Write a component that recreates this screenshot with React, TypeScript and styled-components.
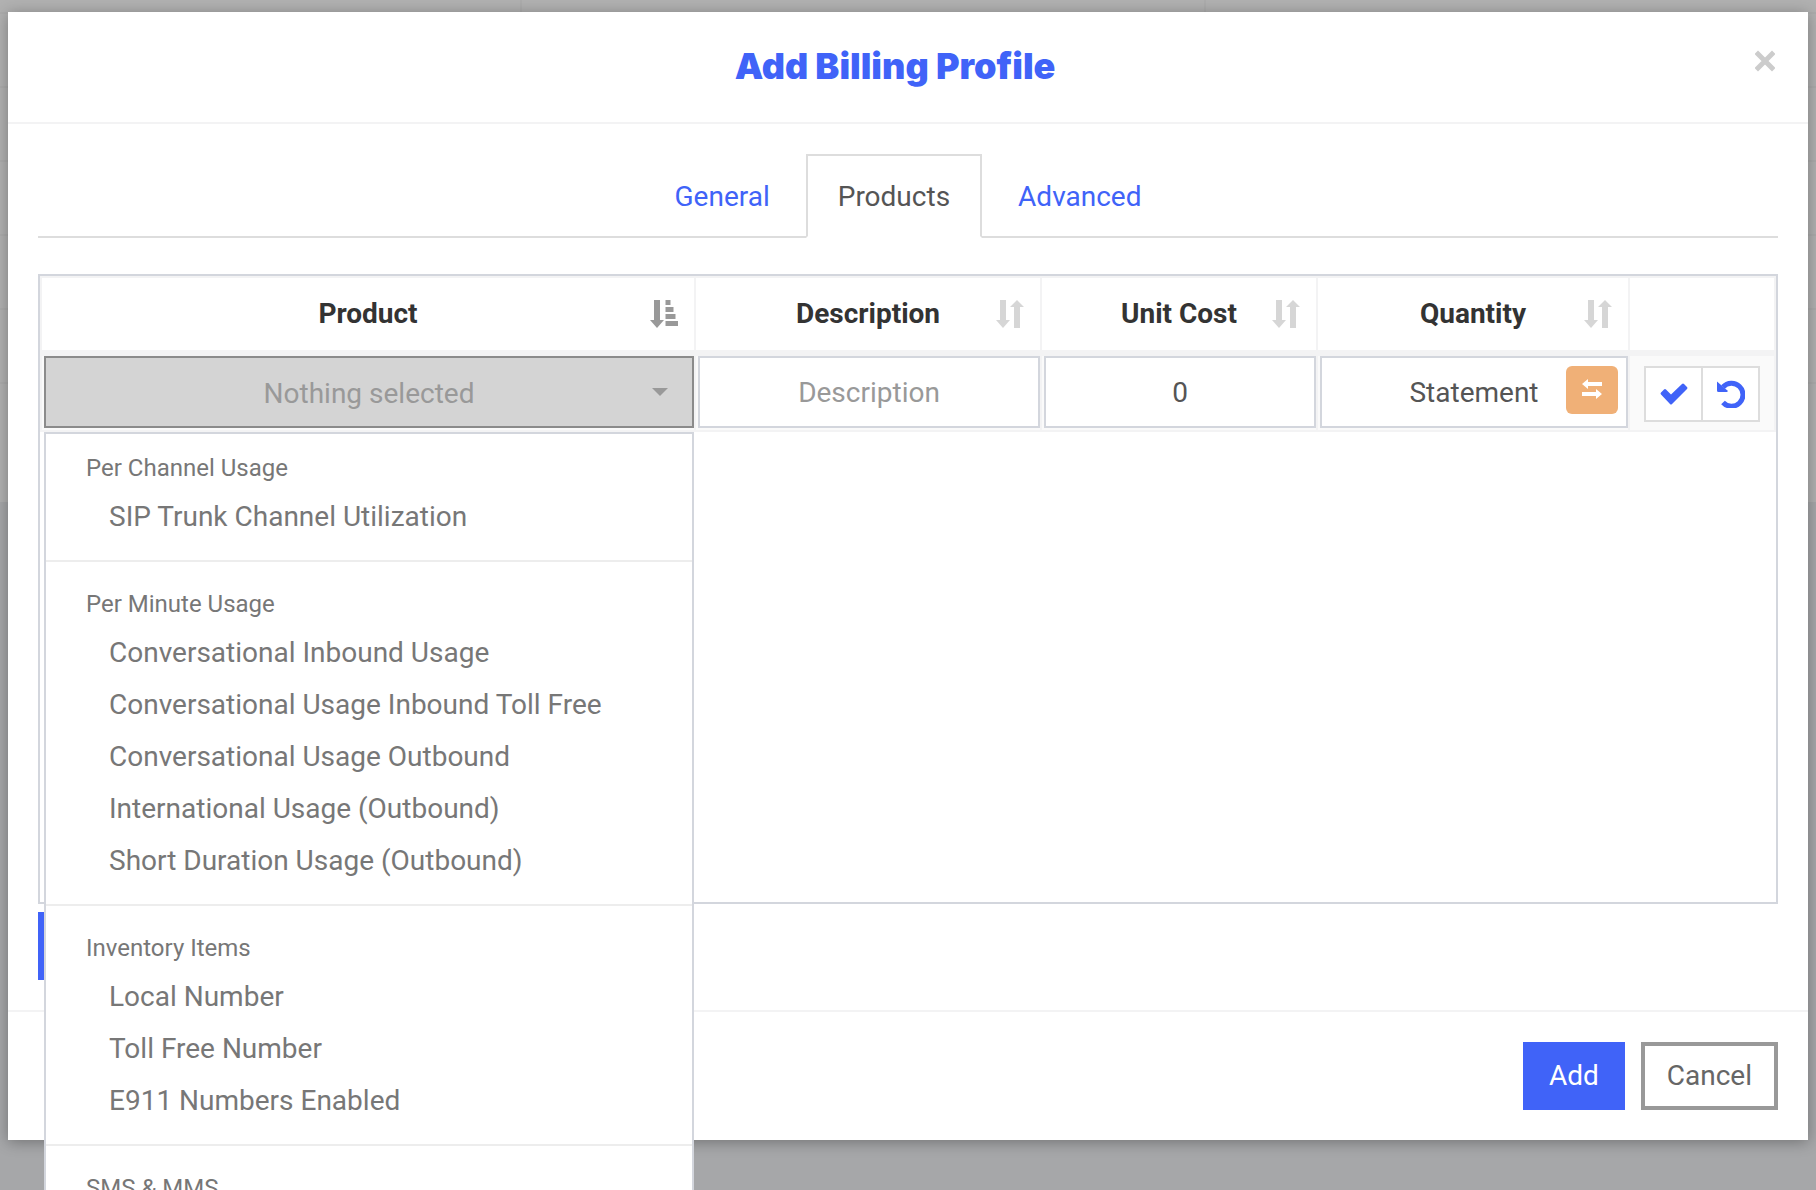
import React, { useState } from "react";
import styled, { createGlobalStyle, css } from "styled-components";

const color = {
  blue: "#4063f8",
  rule: "#f3f3f4",
  tab: "#dddddd",
  frame: "#d3d6dd",
  heading: "#333333",
  text: "#555555",
  menu: "#777777",
  muted: "#999999",
};

const GlobalStyle = createGlobalStyle`
  *, *::before, *::after { box-sizing: border-box; }
  body { margin: 0; overflow: hidden; }
  body, button, input, select {
    font-family: Roboto, "Noto Sans", sans-serif;
    font-size: 28px;
    line-height: 40px;
    color: ${color.text};
  }
  button { padding: 0; border: 0; background: none; cursor: pointer; }
`;

const Page = styled.div`
  display: grid;
  grid-template-columns: minmax(0, 1fr);
  height: 100vh;
  overflow: hidden;
  background: #a6a7a9;
  > * { grid-area: 1 / 1; }
`;

const Behind = styled.div`
  align-self: start;
  padding-bottom: 118px;
  background: #b1b1b1;
`;

const BehindHead = styled.div`
  display: grid;
  grid-template-columns: 520px 684px 1fr;
  height: 14px;
  border-bottom: 2px solid #acacac;
  > span + span { border-left: 2px solid #acacac; }
`;

const BehindRow = styled.div`
  height: 74px;
  border-bottom: 2px solid #acacac;
`;

const Modal = styled.section`
  align-self: start;
  margin: 12px 8px 0;
  background: #fff;
  box-shadow: 0 2px 14px rgba(0, 0, 0, 0.32);
`;

const ModalHeader = styled.header`
  display: flex;
  align-items: flex-start;
  padding: 30px 30px 32px;
  border-bottom: 2px solid ${color.rule};
`;

const Title = styled.h1`
  flex: 1;
  margin: 0;
  text-align: center;
  font-family: Inter, "Open Sans", sans-serif;
  font-size: 36px;
  font-weight: 900;
  line-height: 48px;
  color: ${color.blue};
`;

const Close = styled.button`
  display: flex;
  justify-content: center;
  width: 26px;
  padding: 8px 0;
`;

const ModalBody = styled.div`
  padding: 30px;
`;

const Tabs = styled.nav`
  display: flex;
  justify-content: center;
  gap: 4px;
  border-bottom: 2px solid ${color.tab};
`;

const Tab = styled.a<{ $active?: boolean }>`
  margin-bottom: -2px;
  padding: 21px 30px 19px;
  border: 2px solid transparent;
  color: ${color.blue};
  text-decoration: none;
  ${(p) =>
    p.$active &&
    css`
      border-color: ${color.tab} ${color.tab} #fff;
      background: #fff;
      color: ${color.text};
    `}
`;

const TableFrame = styled.div`
  height: 630px;
  margin: 36px 0 8px;
  border: 2px solid ${color.frame};
`;

const Table = styled.table`
  width: 100%;
  table-layout: fixed;
  border-collapse: separate;
  border-spacing: 0;
`;

const Head = styled.th`
  height: 80px;
  padding: 0;
  border: solid ${color.rule};
  border-width: 2px 2px 6px 0;
  &:first-child { border-left-width: 2px; }
`;

const SortButton = styled.button`
  display: grid;
  grid-template-columns: 1fr auto 1fr;
  align-items: center;
  width: 100%;
  padding: 0 16px;
  font-weight: 700;
  color: ${color.heading};
  > span { grid-column: 2; }
  > svg { justify-self: end; }
`;

const Cell = styled.td`
  padding: 0 0 2px 2px;
  border: solid ${color.rule};
  border-width: 0 2px 2px 0;
  background: #fafafa;
  vertical-align: top;
  &:first-child { border-left-width: 2px; }
`;

const FieldBox = styled.div`
  position: relative;
`;

const fieldStyle = css`
  display: block;
  width: 100%;
  height: 72px;
  margin: 0;
  padding: 0 16px;
  border: 2px solid ${color.frame};
  border-radius: 0;
  outline: none;
  text-align: center;
`;

const Field = styled.input`
  ${fieldStyle}
  background: #fff;
  &::placeholder { color: ${color.muted}; opacity: 1; }
`;

const Picker = styled.select`
  ${fieldStyle}
  appearance: none;
  padding-top: 4px;
  border-color: #8b8b8b;
  background: #d4d4d4;
  color: ${color.muted};
  text-align-last: center;
`;

const Caret = styled.svg`
  position: absolute;
  top: 32px;
  right: 26px;
  pointer-events: none;
`;

const SwapButton = styled.button`
  position: absolute;
  top: 10px;
  right: 10px;
  display: flex;
  justify-content: center;
  width: 52px;
  height: 48px;
  padding-top: 12px;
  border-radius: 6px;
  background: #f0b077;
`;

const Menu = styled.div`
  position: absolute;
  z-index: 2;
  top: calc(100% + 4px);
  left: 0;
  right: 0;
  border: 2px solid ${color.frame};
  background: #fff;
  color: ${color.menu};
`;

const Group = styled.div`
  padding: 19px 20px 17px 40px;
  &:first-child { padding-top: 11px; }
  & + & { border-top: 2px solid #ededed; }
`;

const GroupLabel = styled.div`
  font-size: 24px;
  line-height: 46px;
`;

const Option = styled.div`
  padding-left: 23px;
  line-height: 52px;
`;

const RowActions = styled.div`
  display: flex;
  width: 116px;
  height: 56px;
  margin: 10px 0 0 12px;
  border: 2px solid ${color.tab};
  background: #fff;
`;

const RowAction = styled.button`
  flex: 1;
  display: flex;
  align-items: center;
  justify-content: center;
  & + & { border-left: 2px solid ${color.tab}; }
`;

const ActionButton = styled.button<{ $outline?: boolean }>`
  height: 68px;
  padding: 0 26px;
  background: ${color.blue};
  color: #fff;
  ${(p) =>
    p.$outline &&
    css`
      padding: 0 22px;
      border: 4px solid #999;
      background: #fff;
      color: #666;
    `}
`;

const ModalFooter = styled.footer`
  display: flex;
  justify-content: flex-end;
  gap: 16px;
  padding: 30px;
  border-top: 2px solid ${color.rule};
`;

const SortIcon = ({ active }: { active?: boolean }) =>
  active ? (
    <svg width="28" height="30" viewBox="0 0 28 30" fill="#999" aria-hidden="true">
      <path d="M4 1h6v20h4l-7 8-7-8h4zM15.500 1h5v5h-5zM15.500 8h8v5h-8zM15.500 15h10v5h-10zM15.500 22h12.500v5h-12.500z" />
    </svg>
  ) : (
    <svg width="28" height="30" viewBox="0 0 28 30" fill="#d6d6d6" aria-hidden="true">
      <path d="M4 1h6v20h4l-7 8-7-8h4zM18 29V8h-4l7-7 7 7h-4v21z" />
    </svg>
  );

const columns = ["Product", "Description", "Unit Cost", "Quantity"];

const groups = [
  { label: "Per Channel Usage", items: ["SIP Trunk Channel Utilization"] },
  {
    label: "Per Minute Usage",
    items: [
      "Conversational Inbound Usage",
      "Conversational Usage Inbound Toll Free",
      "Conversational Usage Outbound",
      "International Usage (Outbound)",
      "Short Duration Usage (Outbound)",
    ],
  },
  {
    label: "Inventory Items",
    items: ["Local Number", "Toll Free Number", "E911 Numbers Enabled"],
  },
  { label: "SMS & MMS", items: [] },
];

const AddRow = styled(ActionButton)`
  display: block;
  width: 220px;
`;

export default function App() {
  const [tab, setTab] = useState("Products");
  const [cost, setCost] = useState("0");
  return (
    <Page>
      <GlobalStyle />
      <Behind aria-hidden="true">
        <BehindHead>
          <span />
          <span />
          <span />
        </BehindHead>
        {[1, 2, 3, 4, 5].map((n) => (
          <BehindRow key={n} />
        ))}
      </Behind>
      <Modal role="dialog" aria-labelledby="title">
        <ModalHeader>
          <Title id="title">Add Billing Profile</Title>
          <Close type="button" aria-label="Close">
            <svg width="20" height="22" viewBox="0 0 20 22" aria-hidden="true">
              <path d="M3 4l14 14M17 4L3 18" stroke="#ccc" strokeWidth="5" strokeLinecap="square" />
            </svg>
          </Close>
        </ModalHeader>
        <ModalBody>
          <Tabs>
            {["General", "Products", "Advanced"].map((name) => (
              <Tab key={name} href={`#${name.toLowerCase()}`} $active={name === tab} onClick={() => setTab(name)}>
                {name}
              </Tab>
            ))}
          </Tabs>
          <TableFrame>
            <Table>
              <colgroup>
                <col />
                <col width="346" />
                <col width="276" />
                <col width="312" />
                <col width="146" />
              </colgroup>
              <thead>
                <tr>
                  {columns.map((name, i) => (
                    <Head key={name} scope="col">
                      <SortButton type="button">
                        <span>{name}</span>
                        <SortIcon active={i === 0} />
                      </SortButton>
                    </Head>
                  ))}
                  <Head />
                </tr>
              </thead>
              <tbody>
                <tr>
                  <Cell>
                    <FieldBox>
                      <Picker aria-label="Product" defaultValue="">
                        <option value="">Nothing selected</option>
                      </Picker>
                      <Caret width="16" height="8" viewBox="0 0 16 8" fill="#999" aria-hidden="true">
                        <path d="M0 0h16l-8 8z" />
                      </Caret>
                      <Menu role="listbox" aria-label="Products">
                        {groups.map((group) => (
                          <Group key={group.label} role="group" aria-label={group.label}>
                            <GroupLabel>{group.label}</GroupLabel>
                            {group.items.map((item) => (
                              <Option key={item} role="option" aria-selected={false}>
                                {item}
                              </Option>
                            ))}
                          </Group>
                        ))}
                      </Menu>
                    </FieldBox>
                  </Cell>
                  <Cell>
                    <Field type="text" aria-label="Description" placeholder="Description" />
                  </Cell>
                  <Cell>
                    <Field type="text" aria-label="Unit Cost" value={cost} onChange={(e) => setCost(e.target.value)} />
                  </Cell>
                  <Cell>
                    <FieldBox>
                      <Field type="text" aria-label="Quantity" value="Statement" readOnly />
                      <SwapButton type="button" aria-label="Switch quantity type">
                        <svg width="20" height="22" viewBox="0 0 20 22" fill="#fff" aria-hidden="true">
                          <path d="M0 6l6-5v3h14v4H6v3zM20 16l-6 5v-3H0v-4h14v-3z" />
                        </svg>
                      </SwapButton>
                    </FieldBox>
                  </Cell>
                  <Cell>
                    <RowActions>
                      <RowAction type="button" aria-label="Save row">
                        <svg width="28" height="22" viewBox="0 0 28 22" aria-hidden="true">
                          <path
                            d="M1 9.500l3-3q1-1 2 0l5 5L22 1q1-1 2 0l3 3q1 1 0 2L12 21q-1 1-2 0L1 11.500q-1-1 0-2z"
                            fill={color.blue}
                          />
                        </svg>
                      </RowAction>
                      <RowAction type="button" aria-label="Undo row">
                        <svg width="28" height="28" viewBox="0 0 28 28" fill="none" aria-hidden="true">
                          <path d="M6 7a11.500 11.500 0 1 1 0 15.500" stroke={color.blue} strokeWidth="5" />
                          <path d="M0 1.500v9q0 1.500 1.500 1.500H10l1-1z" fill={color.blue} />
                        </svg>
                      </RowAction>
                    </RowActions>
                  </Cell>
                </tr>
              </tbody>
            </Table>
          </TableFrame>
          <AddRow type="button" aria-label="Add product" />
        </ModalBody>
        <ModalFooter>
          <ActionButton type="button">Add</ActionButton>
          <ActionButton type="button" $outline>
            Cancel
          </ActionButton>
        </ModalFooter>
      </Modal>
    </Page>
  );
}
